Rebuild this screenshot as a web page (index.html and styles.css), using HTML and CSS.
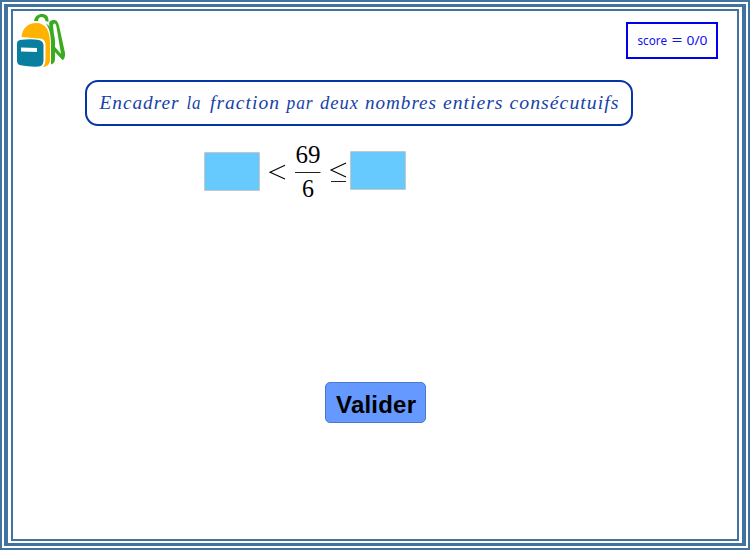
FILE: index.html
```html
<!DOCTYPE html>
<html lang="fr">
<head>
<meta charset="utf-8">
<title>Encadrer une fraction</title>
<link rel="stylesheet" href="styles.css">
</head>
<body>
<div class="frame"><div class="frame-mid"><main class="board">
  <header class="top">
    <svg class="bag" width="50" height="56" viewBox="0 0 50 56" aria-hidden="true">
      <g fill="#3aaa1f">
        <path d="M17 10C18 5 21 3 25 3C29 3 32 5 31.500 11L28.500 10C28 7 26.500 6 24.500 6C22.500 6 21.300 7.500 21 10Z"/>
        <path fill-rule="evenodd" d="M32 13C32 9 36 8.500 39 9.500C41 10.500 42 14 43 19L48 42C48.500 45 47 49.500 45.500 49L37 40L35.500 31L34 20ZM36 14L38 36L44 43L39.500 16C39 12.500 37.500 11.500 36 14Z"/>
        <path d="M29 12.500C36 17 38 24 38 32V48C38 51 36.500 53 34 53.500V34C34 26 33 18 29 12.500Z"/>
      </g>
      <path fill="#ffb300" d="M4.500 26C5.500 17 11 12 19 12C29 12 33 20 33 32V49C33 53 30 56 26 56C28.500 53 28.500 50 28.500 45V34C28.500 29 26 27.500 21 27.500Z"/>
      <path fill="#087f9f" d="M3 29Q14 27.500 22 29Q26 30 26.500 34V50Q26 55 22 55.500Q13 56 5 54.500Q0 54 0 50V33Q0 29.500 3 29Z"/>
      <path fill="#fff" d="M4 36.500L20 37V41L4 40.500Z"/>
    </svg>
    <div class="score">
      <svg width="70" height="20"><text y="13" class="score-text"><tspan x="-0.500" textLength="29.500" lengthAdjust="spacingAndGlyphs">score</tspan> <tspan x="33.500" textLength="11" lengthAdjust="spacingAndGlyphs">=</tspan> <tspan x="48.500" textLength="21" lengthAdjust="spacingAndGlyphs">0/0</tspan></text></svg>
    </div>
  </header>
  <h1 class="prompt">
    <svg width="522" height="30">
      <g class="prompt-text">
        <text x="1.500" y="19.500" textLength="80" lengthAdjust="spacingAndGlyphs">Encadrer</text>
        <text x="88.500" y="19.500" textLength="15" lengthAdjust="spacingAndGlyphs">la</text>
        <text x="112" y="19.500" textLength="70" lengthAdjust="spacingAndGlyphs">fraction</text>
        <text x="188.500" y="19.500" textLength="27" lengthAdjust="spacingAndGlyphs">par</text>
        <text x="222" y="19.500" textLength="39" lengthAdjust="spacingAndGlyphs">deux</text>
        <text x="267" y="19.500" textLength="72" lengthAdjust="spacingAndGlyphs">nombres</text>
        <text x="345" y="19.500" textLength="60.500" lengthAdjust="spacingAndGlyphs">entiers</text>
        <text x="411.500" y="19.500" textLength="110" lengthAdjust="spacingAndGlyphs">consécutuifs</text>
      </g>
    </svg>
  </h1>
  <section class="equation">
    <input class="answer" aria-label="Entier inférieur">
    <svg class="math" width="91" height="62">
      <path class="rel" d="M25 23.300L10 30.200L25 37.100"/>
      <text x="35.500" y="20.500" textLength="25" lengthAdjust="spacingAndGlyphs">69</text>
      <path class="bar" d="M35 30.500H60.500"/>
      <text x="42" y="54.500" textLength="12" lengthAdjust="spacingAndGlyphs">6</text>
      <path class="rel" d="M86 21L71 28L86 35"/>
      <path class="bar" d="M71 39.500H86"/>
    </svg>
    <input class="answer raised" aria-label="Entier supérieur">
  </section>
  <button class="submit"><svg width="80" height="28"><text x="0" y="24" textLength="80">Valider</text></svg></button>
</main></div></div>
</body>
</html>
```
FILE: styles.css
```css
* { box-sizing: border-box; }
body { margin: 0; background: #fff; }
svg { display: block; overflow: visible; }

.frame { width: 750px; height: 550px; border: 2px solid #4272a0; padding: 2px; }
.frame-mid { height: 542px; border: solid #4272a0; border-width: 3px 4px; padding: 2px 3px; }
.board {
  height: 532px;
  border: 2px solid #4272a0;
  display: flex;
  flex-direction: column;
  align-items: flex-start;
}

.top { display: flex; justify-content: space-between; width: 705px; height: 69px; }
.bag { margin-left: 4px; }
.score {
  width: 92px; height: 37px; margin-top: 11px;
  border: 2px solid #0000f0;
  padding: 8px 10px;
}
.score-text { font: 13px "Noto Sans", sans-serif; fill: #1010f0; }

.prompt {
  margin: 0 0 0 72px;
  width: 548px; height: 46px;
  border: 2px solid #0635a5;
  border-radius: 13px;
  padding: 7px 11px;
}
.prompt-text { font: italic 19.5px "Liberation Serif", serif; letter-spacing: 1px; fill: #1742a8; }

.equation { display: flex; margin: 16px 0 0 191px; height: 62px; }
.answer {
  width: 56px; height: 39px; padding: 0;
  margin-top: 10px;
  background: #66caff;
  border: 1px solid #c6c6c6;
  border-radius: 1px;
}
.raised { margin-top: 9px; margin-left: -1px; }
.math text { font: 26px "Liberation Serif", serif; fill: #000; }
.rel { fill: none; stroke: #000; stroke-width: 1.1; }
.bar { fill: none; stroke: #222; stroke-width: 1; }

.submit {
  width: 101px; height: 41px;
  margin: 178px 0 0 312px;
  padding: 6px 10px;
  border: 1px solid #4c7ac8;
  border-radius: 5px;
  background: #6699ff;
}
.submit text { font: bold 24px "Liberation Sans", sans-serif; fill: #000; }
```
